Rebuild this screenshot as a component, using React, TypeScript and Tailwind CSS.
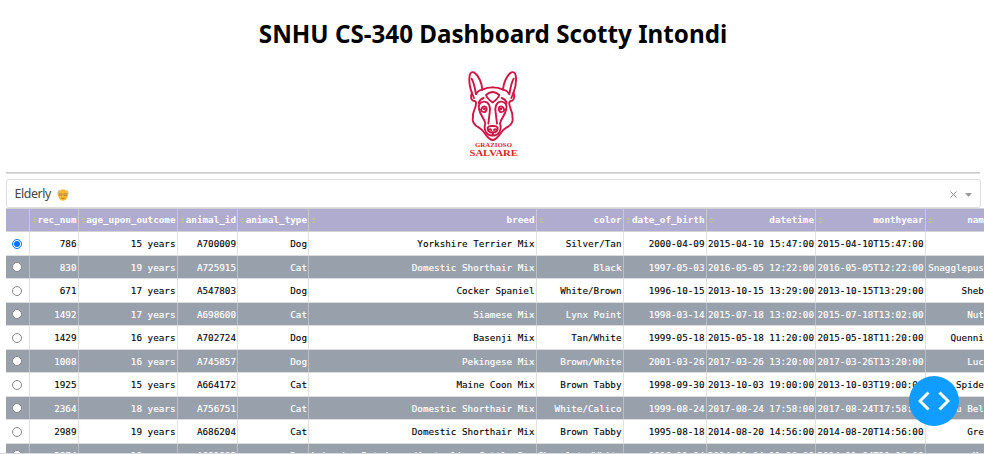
import React from "react";

const columns = [
  { name: "rec_num", w: "w-[49px]" },
  { name: "age_upon_outcome", w: "w-[99px]" },
  { name: "animal_id", w: "w-[60.5px]" },
  { name: "animal_type", w: "w-[71px]" },
  { name: "breed", w: "w-[227.5px]" },
  { name: "color", w: "w-[87px]" },
  { name: "date_of_birth", w: "w-[83px]" },
  { name: "datetime", w: "w-[109.5px]" },
  { name: "monthyear", w: "w-[109.5px]" },
  { name: "name", w: "w-[66px]" },
];

const rows = [
  ["786", "15 years", "A700009", "Dog", "Yorkshire Terrier Mix", "Silver/Tan", "2000-04-09", "2015-04-10 15:47:00", "2015-04-10T15:47:00", ""],
  ["830", "19 years", "A725915", "Cat", "Domestic Shorthair Mix", "Black", "1997-05-03", "2016-05-05 12:22:00", "2016-05-05T12:22:00", "Snagglepuss"],
  ["671", "17 years", "A547803", "Dog", "Cocker Spaniel", "White/Brown", "1996-10-15", "2013-10-15 13:29:00", "2013-10-15T13:29:00", "Sheba"],
  ["1492", "17 years", "A698600", "Cat", "Siamese Mix", "Lynx Point", "1998-03-14", "2015-07-18 13:02:00", "2015-07-18T13:02:00", "Nutt"],
  ["1429", "16 years", "A702724", "Dog", "Basenji Mix", "Tan/White", "1999-05-18", "2015-05-18 11:20:00", "2015-05-18T11:20:00", "Quennie"],
  ["1008", "16 years", "A745857", "Dog", "Pekingese Mix", "Brown/White", "2001-03-26", "2017-03-26 13:20:00", "2017-03-26T13:20:00", "Luck"],
  ["1925", "15 years", "A664172", "Cat", "Maine Coon Mix", "Brown Tabby", "1998-09-30", "2013-10-03 19:00:00", "2013-10-03T19:00:00", "Spider"],
  ["2364", "18 years", "A756751", "Cat", "Domestic Shorthair Mix", "White/Calico", "1999-08-24", "2017-08-24 17:58:00", "2017-08-24T17:58:00", "Lu Bell"],
  ["2989", "19 years", "A686204", "Cat", "Domestic Shorthair Mix", "Brown Tabby", "1995-08-18", "2014-08-20 14:56:00", "2014-08-20T14:56:00", "Grey"],
  ["2874", "18 years", "A691885", "Dog", "Labrador Retriever/Australian Cattle Dog", "Chocolate/White", "1996-11-04", "2014-11-04 11:18:00", "2014-11-04T11:18:00", "Max"],
];

function HalfFace() {
  return (
    <>
      <path d="M128 82Q112 82 97 89C96 70 86 46 72 37Q62 34 59 46C56 62 59 80 65 97L72 114" />
      <path d="M65 56C71 66 75 84 78 103C83 94 89 90 97 89" />
      <path d="M66 98C62 108 63 118 69 122C74 124 77 122 78 127C80 144 66 156 69 170C65 184 72 195 87 203C100 210 104 222 112 230Q120 240 128 240" />
      <path d="M108 105Q118 96 128 96M108 105Q112 117 128 127" />
      <path d="M88 149C83 135 91 124 104 125C118 127 122 142 119 158L115 191" />
      <path d="M88 149C89 165 103 174 106 190Q101 204 108 217Q115 228 128 226" />
      <path d="M93 150Q97 136 108 141Q113 149 105 156Q96 158 93 150ZM101 114Q90 117 86 129" />
      <path d="M113 203Q116 197 128 198M113 203Q112 213 121 217H128M119 208Q122 206 124 211M128 217V226" />
    </>
  );
}

function DogLogo() {
  return (
    <svg className="-mt-2 h-[105px] w-[90px] shrink-0" viewBox="0 0 270 315">
      <g fill="none" stroke="#cf1747" strokeWidth="5.7" strokeLinecap="round" strokeLinejoin="round">
        <HalfFace />
        <g transform="matrix(-1 0 0 1 256 0)"><HalfFace /></g>
      </g>
      <circle cx="103" cy="147" r="4" fill="#cf1747" />
      <circle cx="153" cy="147" r="4" fill="#cf1747" />
      <g fill="#d8252a" fontFamily="Liberation Serif, serif" textAnchor="middle">
        <text x="130.5" y="260" fontSize="16" fontWeight="700" textLength="111" lengthAdjust="spacingAndGlyphs">GRAZIOSO</text>
        <text x="131" y="287" fontSize="25" fontWeight="700" textLength="145" lengthAdjust="spacingAndGlyphs">SALVARE</text>
      </g>
    </svg>
  );
}

function ElderlyFace() {
  return (
    <svg className="ml-[6px] h-3 w-3" viewBox="0 0 12 12">
      <path d="M2 2Q6-1.500 10 2L11 6Q10.500 9.500 8.500 11Q6 12.500 3.500 11Q1.500 9.500 1 6Z" fill="#fdb62f" />
      <path d="M.5 6Q-.2 1.500 2.800 1L2.200 4ZM11.500 6Q12.200 1.500 9.200 1L9.800 4Z" fill="#c9bfa8" />
      <path d="M2 4.800H5V6.500H2ZM7 4.800H10V6.500H7ZM5 5.300H7" fill="#dba943" stroke="#a87d3a" strokeWidth=".5" />
      <path d="M4.300 9Q6 10 7.700 9" fill="none" stroke="#b8701f" strokeWidth=".8" />
    </svg>
  );
}

function SortIcon() {
  return (
    <svg className="ml-[2px] h-[7px] w-[5px] shrink-0" viewBox="0 0 5 7" fill="#b9bca0">
      <path d="M0 3L2.500 0L5 3ZM0 4L2.500 7L5 4Z" />
    </svg>
  );
}

export default function App() {
  return (
    <div className="relative h-[454px] w-[984px] overflow-hidden bg-white font-['Open_Sans',sans-serif]">
      <h1 className="flex h-[68px] items-center justify-center pl-[2px] font-['Noto_Sans',sans-serif] text-[24.2px] font-bold text-black">
        <span className="whitespace-nowrap">SNHU CS-340 Dashboard Scotty Intondi</span>
      </h1>
      <div className="flex h-[104px] justify-center pl-[6px]"><DogLogo /></div>
      <div className="ml-[6px] h-[2px] w-[974px] border-t border-[#cbcbcb] bg-[#dedede]" />
      <div className="mt-[5px] ml-[6px] flex h-[29px] w-[975px] items-center rounded-[3px] border border-[#dedede] pl-[7.5px] text-[#444]">
        <span className="w-[36.5px] pt-[2px] font-['Noto_Sans',sans-serif] text-[12.4px] tracking-[-0.4px] whitespace-nowrap">Elderly</span>
        <div className="pt-[2px]"><ElderlyFace /></div>
        <svg className="mt-[2px] ml-auto h-[7px] w-[7px]" viewBox="0 0 7 7" stroke="#888"><path d="M.5.5L6.500 6.500M6.500.5L.5 6.500" /></svg>
        <svg className="mt-[2px] mr-[8px] ml-[8px] h-[4px] w-[7px]" viewBox="0 0 7 4" fill="#999"><path d="M0 0H7L3.500 4Z" /></svg>
      </div>
      <div className="ml-[6.4px] w-[986px] font-['DejaVu_Sans_Mono',monospace] text-[9.28px]">
        <div className="flex h-[24px] border-t border-b border-[#d3d3d3] bg-[#b0accf] font-bold text-white">
          <div className="w-[23.5px] shrink-0 border-r border-[#c9c7d5]" />
          {columns.map((c) => (
            <div key={c.name} className={`${c.w} flex shrink-0 items-center justify-between border-r border-[#c9c7d5] pr-[1.4px]`}>
              <SortIcon /><span className="-ml-2">{c.name}</span>
            </div>
          ))}
        </div>
        {rows.map((row, i) => (
          <div key={row[0]} className={`flex h-[23.5px] border-b border-[#dcdcdc] ${i % 2 ? "bg-[#98a0ac] text-white" : "bg-white text-black"}`}>
            <div className={`flex w-[23.5px] shrink-0 items-center border-r pt-px pl-[6px] ${i % 2 ? "border-[#b9bec6]" : "border-[#e2e2e2]"}`}>
              <span className={`flex h-[10px] w-[10px] items-center justify-center rounded-full border bg-white ${i === 0 ? "border-[#0875ff]" : "border-[#858585]"}`}>
                {i === 0 && <span className="h-[6px] w-[6px] rounded-full bg-[#0875ff]" />}
              </span>
            </div>
            {row.map((v, j) => (
              <div key={j} className={`${columns[j].w} flex shrink-0 items-center justify-end overflow-hidden border-r pt-[2px] pr-[1.4px] whitespace-nowrap ${i % 2 ? "border-[#b9bec6] [-webkit-text-stroke:0.15px_white]" : "border-[#e2e2e2] [-webkit-text-stroke:0.1px_black]"}`}>{v}</div>
            ))}
          </div>
        ))}
      </div>
      <div className="absolute bottom-0 left-0 h-px w-[984px] bg-[#d5d8dc]" />
      <div className="absolute top-[376px] left-[909px] flex h-[50px] w-[50px] items-center justify-center rounded-full bg-[#119dff]">
        <svg className="h-5 w-8" viewBox="0 0 32 20" fill="none" stroke="white" strokeWidth="3"><path d="M10.500 1.500L2 10L10.500 18.500M21.500 1.500L30 10L21.500 18.500" /></svg>
      </div>
    </div>
  );
}
